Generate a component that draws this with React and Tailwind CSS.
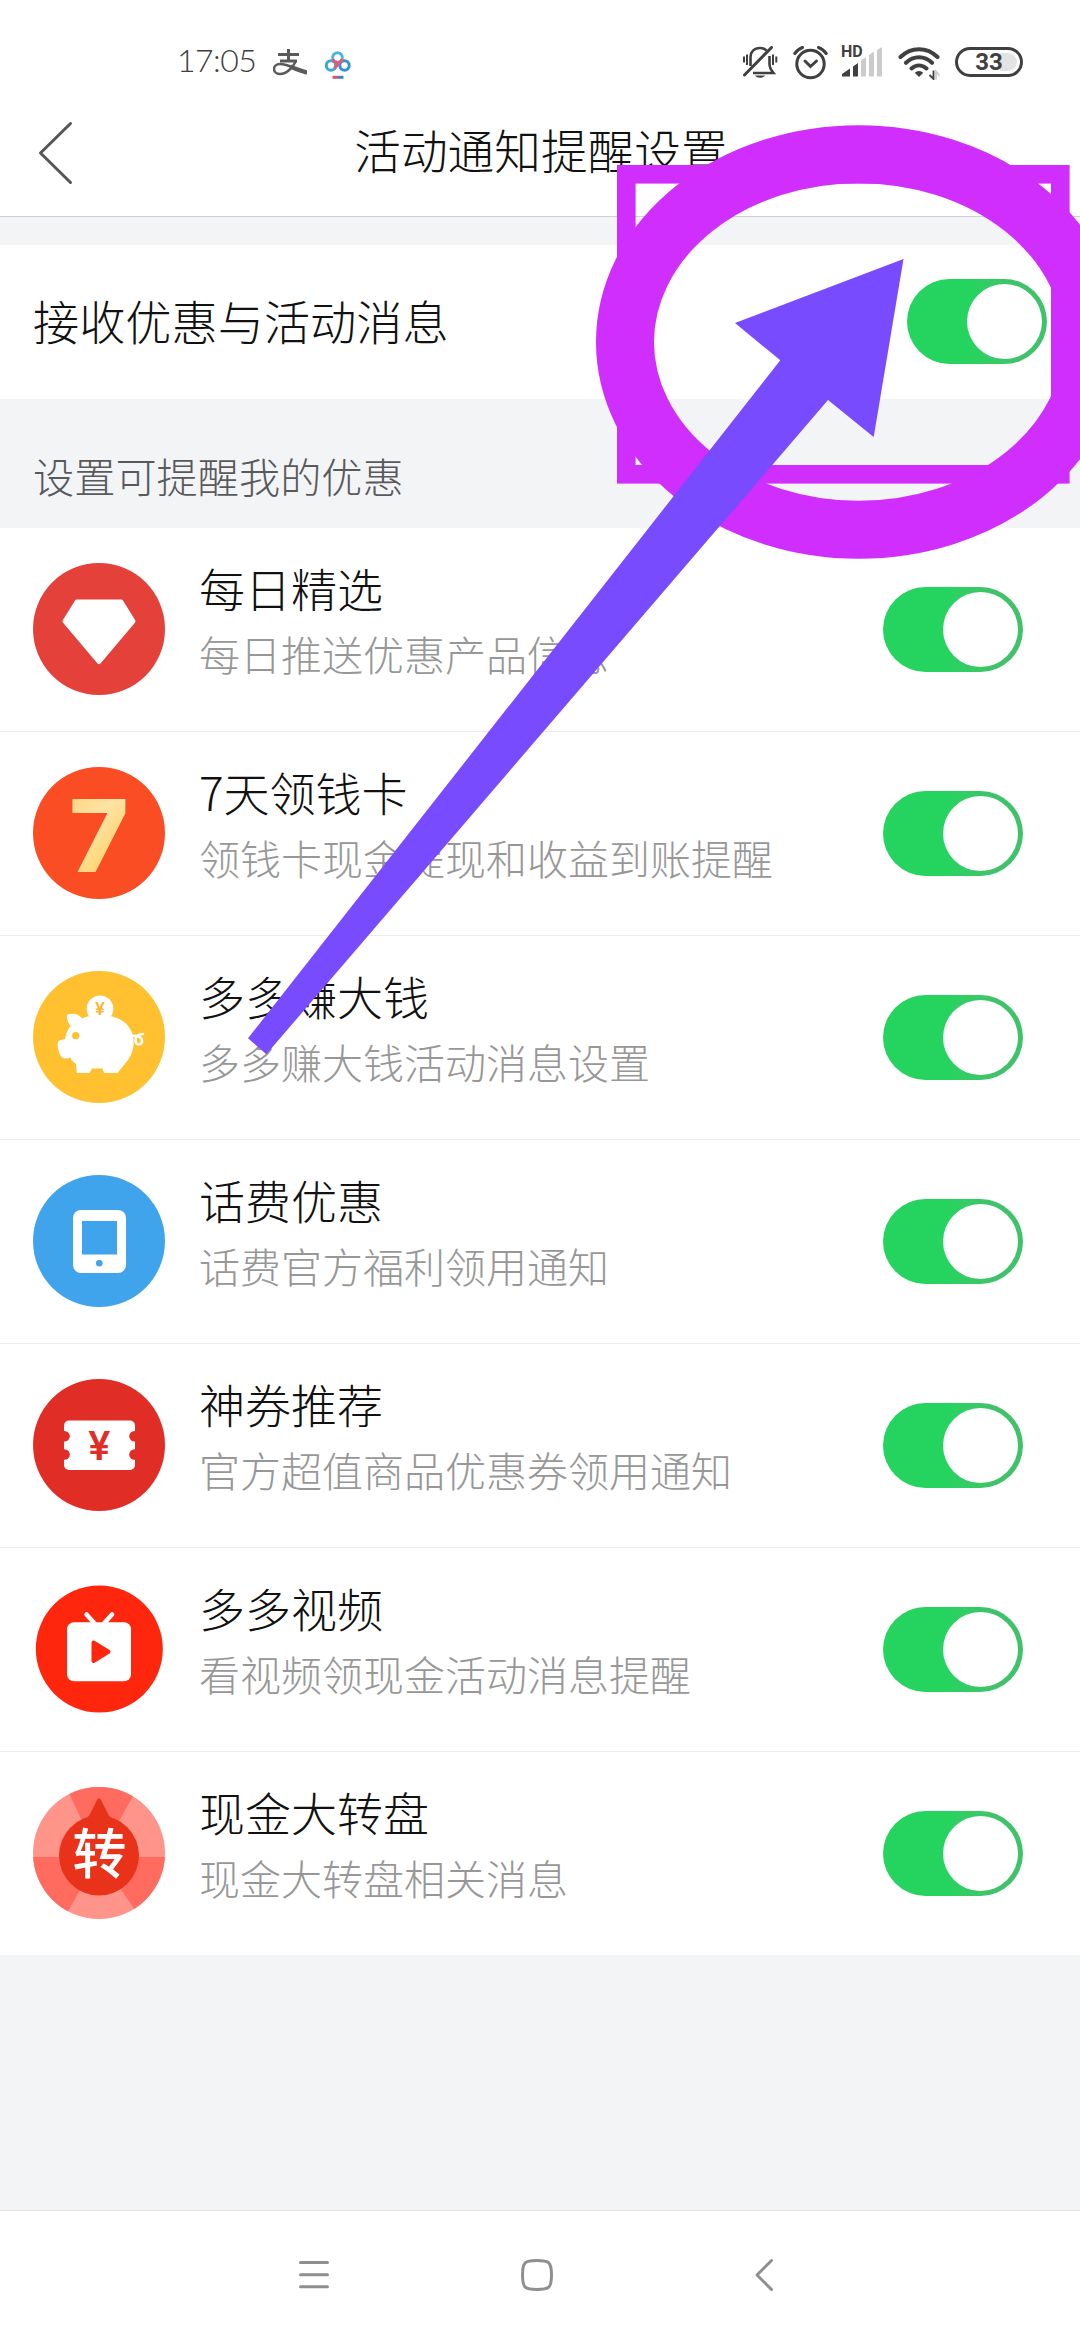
const items = [
  { id: "daily",   title: "每日精选",   desc: "每日推送优惠产品信息",             Icon: GemIcon },
  { id: "seven",   title: "7天领钱卡",  desc: "领钱卡现金提现和收益到账提醒",     Icon: SevenIcon },
  { id: "earn",    title: "多多赚大钱", desc: "多多赚大钱活动消息设置",           Icon: PigIcon },
  { id: "phone",   title: "话费优惠",   desc: "话费官方福利领用通知",             Icon: PhoneIcon },
  { id: "coupon",  title: "神券推荐",   desc: "官方超值商品优惠券领用通知",       Icon: TicketIcon },
  { id: "video",   title: "多多视频",   desc: "看视频领现金活动消息提醒",         Icon: VideoIcon },
  { id: "wheel",   title: "现金大转盘", desc: "现金大转盘相关消息",               Icon: WheelIcon },
];

function GemIcon() {
  return (
    <svg viewBox="0 0 132 132" className="mb-px size-[132px] shrink-0">
      <circle cx="66" cy="66" r="66" fill="#e4413a" />
      <path d="M44 39H88L100 58.2L66 98.5L32 58.2Z" fill="#fff" stroke="#fff" strokeWidth="5" strokeLinejoin="round" />
    </svg>
  );
}

function SevenIcon() {
  return (
    <svg viewBox="0 0 132 132" className="mb-px size-[132px] shrink-0 overflow-visible">
      <defs>
        <linearGradient id="gold" x1="0" y1="0" x2="0.6" y2="1">
          <stop offset="0" stopColor="#ffd27a" />
          <stop offset="0.5" stopColor="#ffe3a3" />
          <stop offset="1" stopColor="#ffcb55" />
        </linearGradient>
      </defs>
      <circle cx="66" cy="66" r="66" fill="#fa4d23" />
      <text x="66" y="104.500" textAnchor="middle" fontFamily="Inter, sans-serif" fontWeight="800" fontSize="101" fill="url(#gold)">7</text>
    </svg>
  );
}

function PigIcon() {
  return (
    <svg viewBox="0 0 132 132" className="mb-px size-[132px] shrink-0">
      <circle cx="66" cy="66" r="66" fill="#ffc12f" />
      <path
        d="M34 43.5C40 42 46 43 49 47.5C54 45 60 44 67 44C85 44 97 52 100 65C102 75 99 83 95 89L84.500 102H71L69.500 97.500H59L56.500 102H43.700L43 93C40 91 38 89 37.500 86.500C34 88 31 88 28.500 86C26 83 25 78 24.500 74C24.500 71 25.500 69.500 28 69L32 68C33 62 35 58 37.700 55C35 52 33.500 48 34 43.500Z"
        fill="#fff"
      />
      <circle cx="42.700" cy="64.700" r="3.600" fill="#ffc12f" />
      <path d="M98 65C104 64 109 66 109 70C109 74 103 75 102.500 70C102 65 106 63 110 63" fill="none" stroke="#fff" strokeWidth="2.500" strokeLinecap="round" />
      <circle cx="67" cy="37.700" r="13.300" fill="#fff" />
      <text x="67" y="43.500" textAnchor="middle" fontFamily="Inter, sans-serif" fontWeight="600" fontSize="17.500" fill="#ffb52a">¥</text>
    </svg>
  );
}

function PhoneIcon() {
  return (
    <svg viewBox="0 0 132 132" className="mb-px size-[132px] shrink-0">
      <circle cx="66" cy="66" r="66" fill="#40a4ec" />
      <rect x="40" y="35" width="53" height="63" rx="8" fill="#fff" />
      <rect x="49" y="46" width="35" height="33.500" fill="#40a4ec" />
      <circle cx="66.300" cy="88.300" r="3.300" fill="#40a4ec" />
    </svg>
  );
}

function TicketIcon() {
  return (
    <svg viewBox="0 0 132 132" className="mb-px size-[132px] shrink-0">
      <circle cx="66" cy="66" r="66" fill="#e02d26" />
      <rect x="31" y="41.500" width="71" height="49.500" rx="5" fill="#fff" />
      <g fill="#e02d26">
        <circle cx="31.500" cy="57.300" r="5.300" />
        <circle cx="31.500" cy="75.500" r="5.300" />
        <circle cx="101.500" cy="57.300" r="5.300" />
        <circle cx="101.500" cy="75.500" r="5.300" />
        <text x="66.300" y="81" textAnchor="middle" fontFamily="Inter, sans-serif" fontWeight="600" fontSize="40">¥</text>
      </g>
    </svg>
  );
}

function VideoIcon() {
  return (
    <svg viewBox="0 0 132 132" className="mb-px size-[132px] shrink-0">
      <circle cx="66.300" cy="66" r="63.500" fill="#ff260e" />
      <rect x="34" y="39.300" width="64" height="59" rx="7" fill="#fff" />
      <path d="M53.500 31.500L63 42M79 31.500L69.500 42" stroke="#fff" strokeWidth="4.500" strokeLinecap="round" />
      <path d="M60.500 59.500L75.500 68.700L60.500 78Z" fill="#ff260e" stroke="#ff260e" strokeWidth="4" strokeLinejoin="round" />
    </svg>
  );
}

function WheelIcon() {
  return (
    <svg viewBox="0 0 132 132" className="mb-px size-[132px] shrink-0">
      <clipPath id="disc"><circle cx="66" cy="66" r="66" /></clipPath>
      <g clipPath="url(#disc)">
        <rect width="132" height="132" fill="#ff948a" />
        <path d="M66 70L33 0H105ZM66 70H0V132H30.500ZM66 70H132V132H108Z" fill="#ff6b5e" />
      </g>
      <circle cx="66" cy="68.500" r="40" fill="#e8321a" />
      <path d="M66 11.500C67 11.500 67.500 12 68 13L75 27C76 29 77.500 30.500 80 31.500L66 40L52 31.500C54.500 30.500 56 29 57 27L64 13C64.500 12 65 11.500 66 11.500Z" fill="#e8321a" />
      <text x="66.500" y="87" textAnchor="middle" fontFamily="Noto Sans CJK SC, sans-serif" fontWeight="500" fontSize="54" fill="#fff">转</text>
    </svg>
  );
}

function Toggle() {
  return (
    <div className="mb-px flex h-[85px] w-[140px] shrink-0 items-center justify-end rounded-full bg-linear-to-r from-[#25d45f] from-45% to-[#40c26a] to-80% pr-[5px]">
      <div className="size-[75px] rounded-full bg-white" />
    </div>
  );
}

function StatusBar() {
  return (
    <div className="flex h-[86px] items-start pl-[177px] pr-[57px] pt-[46px] text-[#404040]">
      <span className="w-24 font-['Lato'] text-[32px] font-light leading-[28px] tracking-[-0.5px]">17:05</span>
      <svg viewBox="0 0 34 32" className="mt-[1px] h-8 w-[34px]" fill="none" stroke="#5a5a5a">
        <path d="M5 7.500H26M15.500 2V14M7 14H24" strokeWidth="3" />
        <path d="M23 14C20 20 14 27 7 27C-1 27 -1 17 7 17C15 17 22 22 34 25.500" strokeWidth="2.500" />
        <path d="M17 19.500C23 22 28 24 34 25.500" strokeWidth="4.500" />
      </svg>
      <svg viewBox="0 0 26 30" className="ml-[18px] mt-[5px] h-[30px] w-[26px]" fill="none" strokeWidth="3">
        <circle cx="6" cy="14.500" r="4.700" stroke="#3aa9dc" />
        <circle cx="19.500" cy="14.500" r="4.700" stroke="#3494cf" />
        <path d="M7.800 8A4.900 4.900 0 1 1 17.200 8" stroke="#4db5d8" />
        <path d="M17.200 8A4.900 4.900 0 0 1 7.800 8M14 12L9.500 17.500" stroke="#dd5c7c" />
        <path d="M7.500 26.300H13" stroke="#d9546f" />
        <path d="M13 26.300H18.500" stroke="#3d82c8" />
      </svg>
      <div className="ml-auto flex items-start">
        <svg viewBox="0 0 35 34" className="h-[34px] w-[35px]" fill="none" stroke="currentColor" strokeWidth="2.600">
          <path d="M7.500 20V11C7.500 6 11 2 17 2C20 2 22 3 23.500 4.500M26.500 10V18C26.500 21 28 24 30.500 27H10" />
          <path d="M1.500 29L28.500 1.500" strokeWidth="3" strokeLinecap="round" />
          <path d="M1 10.500V16.500M4 8.500V19M30 8.500V19M33.300 10.500V16.500" strokeWidth="2" />
          <path d="M12 29.500H22C20 32.500 14 32.500 12 29.500Z" fill="currentColor" stroke="none" />
        </svg>
        <svg viewBox="0 0 35 34" className="ml-[15px] h-[34px] w-[35px]" fill="none" stroke="currentColor" strokeWidth="3" strokeLinecap="round">
          <circle cx="17.500" cy="18" r="13.700" />
          <path d="M12 15L17.500 20.500L23.500 15" />
          <path d="M1.800 7.500C4 4.500 6.500 2.500 9.500 1.500M33.200 7.500C31 4.500 28.500 2.500 25.500 1.500" />
        </svg>
        <div className="relative ml-[13px] h-8 w-[42px]">
          <span className="absolute -top-[2px] left-0 font-['Roboto'] text-[16px] font-bold leading-4">HD</span>
          <svg viewBox="0 0 42 32" className="h-8 w-[42px]">
            <path d="M1 30.500V28L9 22.500V30.500ZM12 30.500V20.500L17 17V30.500Z" fill="#404040" />
            <path d="M20 30.500V14L25 11.500V30.500ZM28 30.500V9L33 5.500V30.500ZM36 30.500V4L41 1V30.500Z" fill="#cbcbcb" />
          </svg>
        </div>
        <svg viewBox="0 0 43 34" className="ml-[15px] h-[34px] w-[43px]" fill="none" stroke="currentColor" strokeWidth="4" strokeLinecap="round">
          <path d="M2.500 11C13 0.500 29 0.500 39.500 11M8 16.800C15.500 9.500 26.500 9.500 34 16.800M13.500 22.500C18 18.500 24 18.500 28.500 22.500" />
          <path d="M21 25C23 25 25 26 25 27L21 31L17 27C17 26 19 25 21 25Z" fill="currentColor" stroke="none" />
          <path d="M35.500 24.500V33L31.500 29" strokeWidth="1.800" strokeLinecap="butt" />
          <path d="M38 33.500V25.500L41.500 29.500" stroke="#cbcbcb" strokeWidth="1.800" strokeLinecap="butt" />
        </svg>
        <div className="relative ml-[14px] mt-[1px] flex h-[30px] w-[68px] items-center justify-center rounded-full border-[3px] border-[#404040]">
          <div className="absolute right-[3px] h-[18px] w-[17px] rounded-r-full bg-[#e3e3e3]" />
          <span className="relative font-['Roboto'] text-[24px] font-bold leading-6">33</span>
        </div>
      </div>
    </div>
  );
}

function TitleBar() {
  return (
    <div className="flex h-[131px] items-center border-b border-[#cfd1d3] px-[38px]">
      <svg viewBox="0 0 36 64" className="mt-[3px] h-16 w-9" fill="none" stroke="#565656" strokeWidth="3" strokeLinecap="round" strokeLinejoin="round">
        <path d="M32.500 2.500L2.500 32L32.500 61.500" />
      </svg>
      <h1 className="-translate-y-[2px] flex-1 pr-[34px] text-center text-[46.700px] leading-none">活动通知提醒设置</h1>
    </div>
  );
}

function ItemRow({ title, desc, Icon }) {
  return (
    <div className="flex h-[204px] items-center border-b border-[#ececec] bg-white pl-[33px] pr-[57px] last:h-[203px] last:border-b-0">
      <Icon />
      <div className="mb-[18px] ml-[34px] flex-1">
        <p className="text-[46px] leading-[66px]">{title}</p>
        <p className="text-[41px] leading-[67px] text-[#979797]">{desc}</p>
      </div>
      <Toggle />
    </div>
  );
}

function NavBar() {
  return (
    <div className="mt-auto flex h-[130px] items-center border-t border-[#e2e2e2] bg-white pb-px pl-[298px] text-[#8f8f8f]">
      <svg viewBox="0 0 32 34" className="h-[34px] w-8" fill="none" stroke="currentColor" strokeWidth="3" strokeLinecap="round">
        <path d="M2.500 4.500H29.500M2.500 16.700H29.500M2.500 28.800H29.500" />
      </svg>
      <svg viewBox="0 0 34 34" className="ml-[190px] h-[34px] w-[34px]" fill="none" stroke="currentColor" strokeWidth="3">
        <path d="M17 2.500C29 2.500 31.500 4 31.500 17S29 31.500 17 31.500S2.500 30 2.500 17S5 2.500 17 2.500Z" />
      </svg>
      <svg viewBox="0 0 20 34" className="ml-[200px] h-[34px] w-5" fill="none" stroke="currentColor" strokeWidth="3" strokeLinecap="round" strokeLinejoin="round">
        <path d="M17.500 2.500L3 17L17.500 31.500" />
      </svg>
    </div>
  );
}

// hand-drawn marks pointing at the main switch
function Markup() {
  return (
    <svg viewBox="0 0 1080 2340" className="pointer-events-none absolute inset-0 h-[2340px] w-[1080px]">
      <g fill="none" stroke="#d02efc">
        <ellipse cx="858.700" cy="342" rx="233.700" ry="187.800" strokeWidth="58" />
        <rect x="626.300" y="174.300" width="434" height="300" strokeWidth="18.600" />
      </g>
      <path d="M903.500 259L735 323L780.300 360.300L248 1038.300L266.300 1054.300L828 400L873.700 437Z" fill="#784bff" />
    </svg>
  );
}

export default function App() {
  return (
    <div className="relative flex h-[2340px] w-[1080px] flex-col overflow-hidden bg-[#f3f4f6] font-['Noto_Sans_CJK_SC',sans-serif] font-light text-[#111]">
      <div className="bg-white">
        <StatusBar />
        <TitleBar />
      </div>
      <div className="mt-7 flex h-[154px] items-center justify-between bg-white px-[33px]">
        <span className="pb-1 text-[46.200px]">接收优惠与活动消息</span>
        <Toggle />
      </div>
      <div className="flex h-[129px] items-center px-[33px] pt-6 text-[41.200px] text-[#58595b]">设置可提醒我的优惠</div>
      <div>
        {items.map(i => (
          <ItemRow key={i.id} title={i.title} desc={i.desc} Icon={i.Icon} />
        ))}
      </div>
      <NavBar />
      <Markup />
    </div>
  );
}
